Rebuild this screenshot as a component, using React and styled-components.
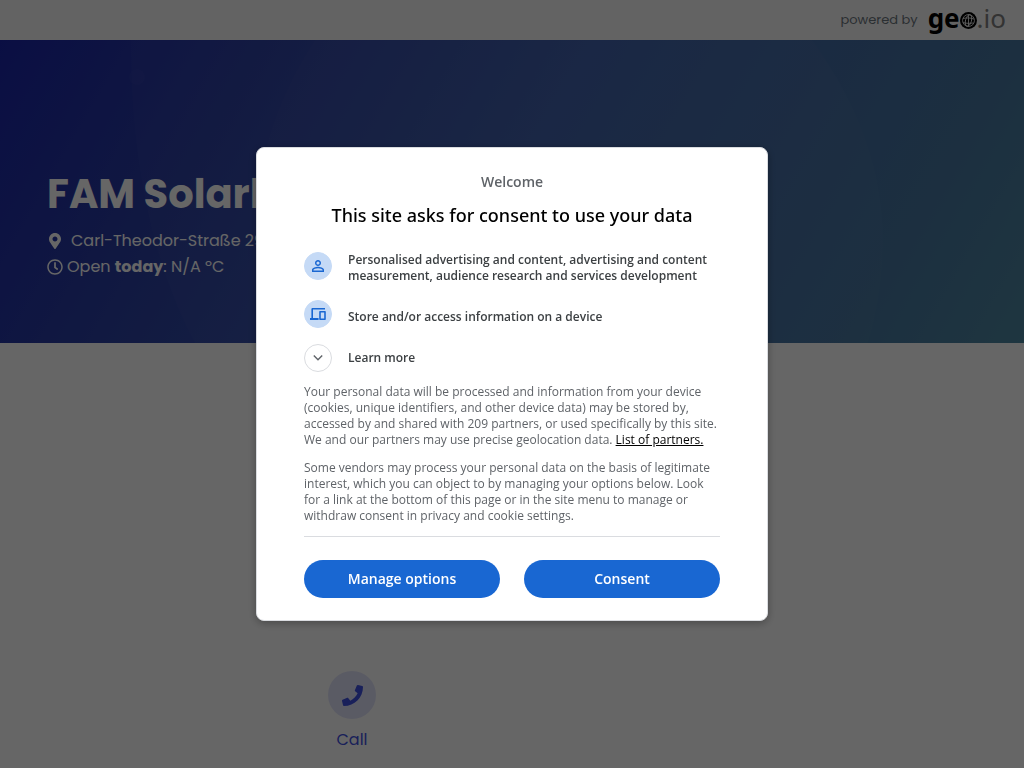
import React from "react";
import styled, { createGlobalStyle } from "styled-components";
import { FaMapMarkerAlt, FaRegClock, FaPhone } from "react-icons/fa";
import { MdPersonOutline } from "react-icons/md";

const GlobalStyle = createGlobalStyle`
  *, *::before, *::after { box-sizing: border-box; }
  body {
    margin: 0;
    background: #fff;
    font-family: Poppins, Inter, sans-serif;
    font-size: 16px;
  }
`;

const Header = styled.header`
  display: flex;
  align-items: center;
  justify-content: flex-end;
  gap: 10px;
  height: 40px;
  padding: 0 18px;
  background: #f8f8f8;
  color: #6c757d;
  font-size: 13px;
`;

const Logo = styled.a`
  display: flex;
  align-items: center;
  padding-bottom: 4px;
  color: #000;
  font: 700 26px/32px "Noto Sans", "Open Sans", sans-serif;
  text-decoration: none;

  svg {
    margin-top: 5px;
  }
`;

const LogoSuffix = styled.span`
  color: #808080;
  font-weight: 400;
`;

const Hero = styled.section`
  position: relative;
  overflow: hidden;
  padding: 128px 47px 63px;
  background: linear-gradient(120deg, #1b25a8 0%, #2b3fa3 22%, #3c5caa 50%, #43749f 85%, #4a85a0 100%);
  color: #fff;
`;

const HeroPattern = styled.svg`
  position: absolute;
  inset: 0;
  width: 100%;
  height: 100%;
`;

const HeroText = styled.div`
  position: relative;
`;

const Title = styled.h1`
  margin: 0 0 8px;
  font-size: 40px;
  font-weight: 700;
  line-height: 52px;
  white-space: nowrap;
`;

const HeroLine = styled.p`
  display: flex;
  align-items: center;
  gap: ${(p) => p.$gap}px;
  margin: 0;
  line-height: 26px;
  white-space: nowrap;
`;

const Actions = styled.nav`
  display: grid;
  grid-template-columns: repeat(2, 1fr);
  max-width: 640px;
  margin: 0 auto;
  padding: 328px 0 16px;
`;

const Action = styled.a`
  display: flex;
  flex-direction: column;
  align-items: center;
  gap: 9px;
  color: #3f51e0;
  line-height: 24px;
  text-decoration: none;
`;

const ActionIcon = styled.span`
  display: grid;
  place-items: center;
  width: 48px;
  height: 48px;
  border-radius: 50%;
  background: #e2e4fb;
`;

const Overlay = styled.div`
  position: fixed;
  inset: 0;
  display: flex;
  align-items: center;
  justify-content: center;
  background: rgba(0, 0, 0, 0.6);
`;

const Dialog = styled.section`
  width: 50%;
  min-width: 512px;
  max-width: 640px;
  padding: 24px 47px 22px;
  border: 1px solid #dadce0;
  border-radius: 8px;
  background: #fff;
  box-shadow: 0 2px 8px rgba(0, 0, 0, 0.3);
  color: #3c4043;
  font: 400 12px/16px "Open Sans", sans-serif;
`;

const Welcome = styled.p`
  margin: 0;
  color: #5f6368;
  font-size: 14px;
  font-weight: 600;
  line-height: 20px;
  text-align: center;
`;

const Heading = styled.h2`
  margin: 11px 0 24px;
  color: #000;
  font-family: "Noto Sans", "Open Sans", sans-serif;
  font-size: 18px;
  font-weight: 500;
  line-height: 24px;
  text-align: center;
`;

const PurposeList = styled.ul`
  display: flex;
  flex-direction: column;
  gap: 16px;
  margin: 0;
  padding: 1px 0 0;
  list-style: none;
`;

const Purpose = styled.li`
  display: flex;
  align-items: flex-start;
  gap: 16px;
  font-weight: 600;
`;

const PurposeText = styled.span`
  padding-top: ${(p) => (p.$single ? 9 : 0)}px;
`;

const Badge = styled.span`
  display: grid;
  flex: none;
  place-items: center;
  width: 28px;
  height: 28px;
  border: 1px solid ${(p) => (p.$outlined ? "#dadce0" : "#c5daf6")};
  border-radius: 50%;
  background: ${(p) => (p.$outlined ? "#fff" : "#c5daf6")};
  color: ${(p) => (p.$outlined ? "#5f6368" : "#1967d2")};
`;

const LearnMore = styled.button`
  display: flex;
  align-items: center;
  gap: 16px;
  margin: 16px 0 12px;
  padding: 0;
  border: 0;
  background: none;
  color: inherit;
  font: inherit;
  font-weight: 600;
  cursor: pointer;
`;

const Paragraph = styled.p`
  margin: 0 0 12px;
  color: #5f6368;
`;

const PartnersLink = styled.a`
  color: #000;
`;

const Buttons = styled.div`
  display: grid;
  grid-template-columns: 1fr 1fr;
  gap: 24px;
  padding-top: 23px;
  border-top: 1px solid #dadce0;
`;

const Button = styled.button`
  height: 38px;
  border: 0;
  border-radius: 19px;
  background: #1967d2;
  color: #fff;
  font: 600 14px/20px "Open Sans", sans-serif;
  cursor: pointer;
`;

const Globe = () => (
  <svg width="17" height="17" viewBox="0 0 16 16" fill="none" aria-hidden="true">
    <circle cx="8" cy="8" r="8" fill="#000" />
    <g stroke="#f8f8f8" strokeWidth="0.8">
      <circle cx="8" cy="8" r="5.6" />
      <ellipse cx="8" cy="8" rx="2.8" ry="5.6" transform="rotate(15 8 8)" />
      <path d="M2.8 6.2c3-1 7-.8 10.3.4M2.8 10c3 .8 7 .8 10 .3M8 2.4v11.2" />
    </g>
  </svg>
);

const DevicesIcon = () => (
  <svg width="16" height="14" viewBox="0 0 16 14" fill="currentColor" aria-hidden="true">
    <path d="M3 2.6h12V1H2.6C1.9 1 1.4 1.5 1.4 2.2V11H0v2h8.6v-2H3Z" />
    <path fillRule="evenodd" d="M10 4h5c.5 0 .8.3.8.8v7.4c0 .5-.3.8-.8.8h-5c-.5 0-.8-.3-.8-.8V4.8c0-.5.3-.8.8-.8Zm.8 1.6v5.8h3.4V5.6Z" />
  </svg>
);

export default function App() {
  return (
    <>
      <GlobalStyle />
      <Header>
        <span>powered by</span>
        <Logo href="#">
          <span>ge</span>
          <Globe />
          <LogoSuffix>.io</LogoSuffix>
        </Logo>
      </Header>
      <main>
        <Hero>
          <HeroPattern viewBox="0 0 1024 303" preserveAspectRatio="none" aria-hidden="true">
            <path d="M131 0C130 110 150 220 195 303H1024V0Z" fill="#fff" opacity="0.02" />
            <path d="M315 0C255 90 240 200 262 303H868C898 200 885 100 812 0Z" fill="#fff" opacity="0.02" />
            <circle cx="137" cy="37" r="8" fill="#fff" opacity="0.02" />
          </HeroPattern>
          <HeroText>
            <Title>FAM Solarl</Title>
            <HeroLine $gap={8}>
              <FaMapMarkerAlt size={16} />
              <span>Carl-Theodor-Straße 29</span>
            </HeroLine>
            <HeroLine $gap={4}>
              <FaRegClock size={16} />
              <span>Open <strong>today</strong>: N/A ºC</span>
            </HeroLine>
          </HeroText>
        </Hero>
        <Actions>
          <Action href="#call">
            <ActionIcon><FaPhone size={21} /></ActionIcon>
            Call
          </Action>
        </Actions>
      </main>
      <Overlay>
        <Dialog role="dialog" aria-modal="true" aria-labelledby="consent-title">
          <Welcome>Welcome</Welcome>
          <Heading id="consent-title">This site asks for consent to use your data</Heading>
          <PurposeList>
            <Purpose>
              <Badge><MdPersonOutline size={18} /></Badge>
              <PurposeText>
                Personalised advertising and content, advertising and content measurement, audience research and services development
              </PurposeText>
            </Purpose>
            <Purpose>
              <Badge><DevicesIcon /></Badge>
              <PurposeText $single>Store and/or access information on a device</PurposeText>
            </Purpose>
          </PurposeList>
          <LearnMore type="button" aria-expanded="false">
            <Badge $outlined>
              <svg width="10" height="6" viewBox="0 0 10 6" fill="none" stroke="currentColor" strokeWidth="1.4" aria-hidden="true">
                <path d="M.8.6 5 4.8 9.2.6" />
              </svg>
            </Badge>
            Learn more
          </LearnMore>
          <Paragraph>
            Your personal data will be processed and information from your device (cookies, unique identifiers, and other device data) may be stored by, accessed by and shared with 209 partners, or used specifically by this site. We and our partners may use precise geolocation data.{" "}
            <PartnersLink href="#partners">List of partners.</PartnersLink>
          </Paragraph>
          <Paragraph>
            Some vendors may process your personal data on the basis of legitimate interest, which you can object to by managing your options below. Look for a link at the bottom of this page or in the site menu to manage or withdraw consent in privacy and cookie settings.
          </Paragraph>
          <Buttons>
            <Button type="button">Manage options</Button>
            <Button type="button">Consent</Button>
          </Buttons>
        </Dialog>
      </Overlay>
    </>
  );
}
